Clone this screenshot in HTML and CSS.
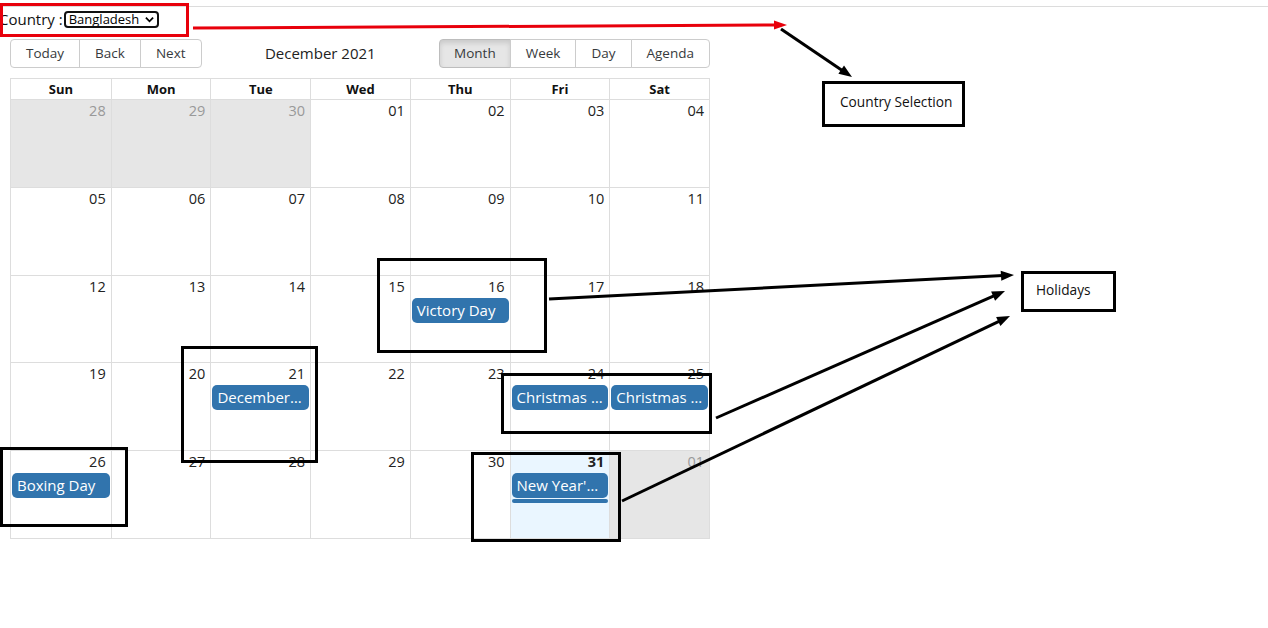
FILE: index.html
```html
<!DOCTYPE html>
<html>
<head>
<meta charset="utf-8">
<link rel="stylesheet" href="styles.css">
</head>
<body>
<div class="page">
  <div class="topline"></div>
  <div class="country-row">
    <span class="country-label">Country :</span>
    <span class="select-wrap">
      <select class="country-select"><option>Bangladesh</option></select>
      <svg class="chev" viewBox="0 0 10 7"><path d="M1 1.5 L5 5.5 L9 1.5" fill="none" stroke="#000" stroke-width="2"/></svg>
    </span>
  </div>

  <div class="calendar">
    <div class="toolbar">
      <div class="btn-group">
        <button class="btn">Today</button><button class="btn">Back</button><button class="btn">Next</button>
      </div>
      <div class="toolbar-label">December 2021</div>
      <div class="btn-group">
        <button class="btn active">Month</button><button class="btn">Week</button><button class="btn">Day</button><button class="btn">Agenda</button>
      </div>
    </div>

    <div class="month">
      <div class="header-row">
        <div class="hcell">Sun</div><div class="hcell">Mon</div><div class="hcell">Tue</div><div class="hcell">Wed</div><div class="hcell">Thu</div><div class="hcell">Fri</div><div class="hcell">Sat</div>
      </div>
      <div class="week">
        <div class="day off"><div class="date">28</div></div>
        <div class="day off"><div class="date">29</div></div>
        <div class="day off"><div class="date">30</div></div>
        <div class="day"><div class="date">01</div></div>
        <div class="day"><div class="date">02</div></div>
        <div class="day"><div class="date">03</div></div>
        <div class="day"><div class="date">04</div></div>
      </div>
      <div class="week">
        <div class="day"><div class="date">05</div></div>
        <div class="day"><div class="date">06</div></div>
        <div class="day"><div class="date">07</div></div>
        <div class="day"><div class="date">08</div></div>
        <div class="day"><div class="date">09</div></div>
        <div class="day"><div class="date">10</div></div>
        <div class="day"><div class="date">11</div></div>
      </div>
      <div class="week">
        <div class="day"><div class="date">12</div></div>
        <div class="day"><div class="date">13</div></div>
        <div class="day"><div class="date">14</div></div>
        <div class="day"><div class="date">15</div></div>
        <div class="day"><div class="date">16</div><div class="event">Victory Day</div></div>
        <div class="day"><div class="date">17</div></div>
        <div class="day"><div class="date">18</div></div>
      </div>
      <div class="week">
        <div class="day"><div class="date">19</div></div>
        <div class="day"><div class="date">20</div></div>
        <div class="day"><div class="date">21</div><div class="event">December Solstice</div></div>
        <div class="day"><div class="date">22</div></div>
        <div class="day"><div class="date">23</div></div>
        <div class="day"><div class="date">24</div><div class="event">Christmas Eve</div></div>
        <div class="day"><div class="date">25</div><div class="event">Christmas Day</div></div>
      </div>
      <div class="week">
        <div class="day"><div class="date">26</div><div class="event">Boxing Day</div></div>
        <div class="day"><div class="date">27</div></div>
        <div class="day"><div class="date">28</div></div>
        <div class="day"><div class="date">29</div></div>
        <div class="day"><div class="date">30</div></div>
        <div class="day today"><div class="date">31</div><div class="event">New Year's Eve</div><div class="event-sliver"></div></div>
        <div class="day off"><div class="date">01</div></div>
      </div>
    </div>
  </div>

  <svg class="annotations" width="1268" height="628" viewBox="0 0 1268 628">
    <rect x="1.5" y="4.5" width="186" height="31" class="red-box"/>
    <line x1="193" y1="28" x2="776" y2="25" class="red-line"/>
    <polygon points="787,25 774,29.5 774,20.5" fill="#e8000b"/>

    <line x1="781" y1="29" x2="843" y2="71" class="blk-line"/>
    <polygon points="852,77 838.4,73.8 844,65.6" fill="#000"/>

    <rect x="823.5" y="82.5" width="140" height="43" class="blk-box"/>
    <text x="840" y="107" class="note">Country Selection</text>

    <rect x="378.5" y="259.5" width="167" height="92" class="blk-box"/>
    <rect x="182.5" y="347.5" width="134" height="114" class="blk-box"/>
    <rect x="502.5" y="374.5" width="208" height="58" class="blk-box"/>
    <rect x="1.5" y="448.5" width="125" height="77" class="blk-box"/>
    <rect x="472.5" y="453.5" width="147" height="87" class="blk-box"/>

    <rect x="1022.5" y="272.5" width="92" height="38" class="blk-box"/>
    <text x="1036" y="295" class="note">Holidays</text>

    <line x1="549" y1="299" x2="1003" y2="275.6" class="blk-line"/>
    <polygon points="1014,275 1001.3,280.7 1000.7,270.7" fill="#000"/>

    <line x1="716" y1="418" x2="995" y2="295.4" class="blk-line"/>
    <polygon points="1005,291 995.1,300.8 991.1,291.6" fill="#000"/>

    <line x1="622" y1="501" x2="1000" y2="320.8" class="blk-line"/>
    <polygon points="1010,316 1000.4,326.1 996.1,317.1" fill="#000"/>
  </svg>
</div>
</body>
</html>
```

FILE: styles.css
```css
* { box-sizing: border-box; }

body {
  margin: 0;
  font-family: "Open Sans", "Noto Sans", sans-serif;
  color: #212121;
  background: #fff;
}

.page {
  position: relative;
  width: 1268px;
  height: 628px;
  overflow: hidden;
}

.topline {
  height: 7px;
  border-bottom: 1px solid #dcdcdc;
}

.country-row {
  display: flex;
  align-items: center;
  height: 24px;
  font-size: 15px;
  color: #111;
}

.country-label {
  margin-left: -1px;
}

.select-wrap {
  position: relative;
  display: inline-flex;
  margin-left: 1px;
}

.country-select {
  appearance: none;
  -webkit-appearance: none;
  font-family: "Open Sans", sans-serif;
  font-size: 13px;
  color: #000;
  background: #fff;
  border: 2px solid #111;
  border-radius: 4px;
  height: 17px;
  width: 95px;
  padding: 0 16px 0 3px;
  line-height: 13px;
}

.chev {
  position: absolute;
  right: 5px;
  top: 5px;
  width: 9px;
  height: 7px;
}

.calendar {
  width: 700px;
  margin: 8px 0 0 10px;
}

.toolbar {
  display: flex;
  align-items: center;
  height: 28px;
  margin-bottom: 11px;
}

.btn-group {
  display: flex;
}

.btn {
  font-family: "Open Sans", sans-serif;
  font-size: 13.5px;
  color: #373a3c;
  background: #fff;
  border: 1px solid #ccc;
  height: 29px;
  padding: 0 15px;
  margin: 0 0 0 -1px;
}

.btn:first-child {
  margin-left: 0;
  border-radius: 4px 0 0 4px;
}

.btn:last-child {
  border-radius: 0 4px 4px 0;
}

.btn.active {
  background: #e6e6e6;
  border-color: #bdbdbd;
  box-shadow: inset 0 3px 5px rgba(0, 0, 0, 0.125);
  padding: 0 14px;
}

.toolbar-label {
  flex: 1;
  text-align: center;
  font-size: 15px;
  color: #222;
}

.month {
  display: flex;
  flex-direction: column;
  height: 461px;
  border: 1px solid #ddd;
}

.header-row {
  display: grid;
  grid-template-columns: repeat(7, 1fr);
  height: 21px;
  border-bottom: 1px solid #ddd;
}

.hcell {
  text-align: center;
  font-weight: 700;
  font-size: 13px;
  line-height: 20px;
  color: #111;
  border-left: 1px solid #ddd;
}

.hcell:first-child { border-left: none; }

.week {
  flex: 1;
  display: grid;
  grid-template-columns: repeat(7, 1fr);
  min-height: 0;
}

.week + .week { border-top: 1px solid #ddd; }

.day {
  border-left: 1px solid #ddd;
  min-width: 0;
  overflow: hidden;
}

.day:first-child { border-left: none; }

.day.off { background: #e6e6e6; }
.day.off .date { color: #999; }

.day.today { background: #eaf6ff; }
.day.today .date { font-weight: 700; }

.date {
  text-align: right;
  padding: 0 5px;
  font-size: 14.5px;
  line-height: 22px;
  height: 22px;
  color: #222;
}

.event {
  margin: 0 1px;
  padding: 2px 5px;
  background: #3174ad;
  color: #fff;
  border-radius: 5px;
  font-size: 15px;
  line-height: 21px;
  white-space: nowrap;
  overflow: hidden;
  text-overflow: ellipsis;
}

.event-sliver {
  margin: 1px 1px 0;
  height: 4px;
  background: #3174ad;
  border-radius: 2px;
}

.annotations {
  position: absolute;
  left: 0;
  top: 0;
  pointer-events: none;
}

.red-box {
  fill: none;
  stroke: #e8000b;
  stroke-width: 3;
}

.red-line {
  stroke: #e8000b;
  stroke-width: 3;
}

.blk-box {
  fill: none;
  stroke: #000;
  stroke-width: 3;
}

.blk-line {
  stroke: #000;
  stroke-width: 3;
}

.note {
  font-family: "Open Sans", sans-serif;
  font-size: 13.7px;
  fill: #111;
}
```
